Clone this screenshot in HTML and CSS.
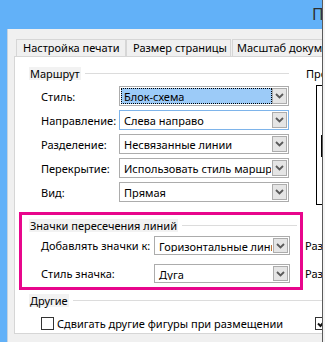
FILE: index.html
```html
<!DOCTYPE html>
<html lang="ru">
<head>
    <meta charset="UTF-8">
    <title>Параметры страницы</title>
    <link rel="stylesheet" href="styles.css">
</head>
<body>
    <div class="window">
        <div class="titlebar">Параметры страницы</div>

        <div class="dialog">
            <div class="tabs">
                <div class="tab tab-print">Настройка печати</div>
                <div class="tab tab-size">Размер страницы</div>
                <div class="tab tab-scale">Масштаб документа</div>
                <div class="tab">Свойства страницы</div>
            </div>

            <div class="panel">
                <!-- Маршрут + просмотр -->
                <div class="section">
                    <div class="col-left">
                        <div class="group-head route-head">
                            <span class="group-label">Маршрут</span>
                            <span class="group-line"></span>
                        </div>
                        <div class="row">
                            <span class="row-label">Стиль:</span>
                            <div class="select">
                                <span class="value focused">Блок-схема</span>
                                <span class="arrow"><svg width="9" height="6" viewBox="0 0 9 6"><polyline points="1,1 4.5,4.5 8,1" fill="none" stroke="#5a5a5a" stroke-width="1.8"/></svg></span>
                            </div>
                        </div>
                        <div class="row">
                            <span class="row-label">Направление:</span>
                            <div class="select hover">
                                <span class="value">Слева направо</span>
                                <span class="arrow"><svg width="9" height="6" viewBox="0 0 9 6"><polyline points="1,1 4.5,4.5 8,1" fill="none" stroke="#5a5a5a" stroke-width="1.8"/></svg></span>
                            </div>
                        </div>
                        <div class="row">
                            <span class="row-label">Разделение:</span>
                            <div class="select">
                                <span class="value">Несвязанные линии</span>
                                <span class="arrow"><svg width="9" height="6" viewBox="0 0 9 6"><polyline points="1,1 4.5,4.5 8,1" fill="none" stroke="#5a5a5a" stroke-width="1.8"/></svg></span>
                            </div>
                        </div>
                        <div class="row">
                            <span class="row-label">Перекрытие:</span>
                            <div class="select">
                                <span class="value">Использовать стиль маршрута</span>
                                <span class="arrow"><svg width="9" height="6" viewBox="0 0 9 6"><polyline points="1,1 4.5,4.5 8,1" fill="none" stroke="#5a5a5a" stroke-width="1.8"/></svg></span>
                            </div>
                        </div>
                        <div class="row">
                            <span class="row-label">Вид:</span>
                            <div class="select">
                                <span class="value">Прямая</span>
                                <span class="arrow"><svg width="9" height="6" viewBox="0 0 9 6"><polyline points="1,1 4.5,4.5 8,1" fill="none" stroke="#5a5a5a" stroke-width="1.8"/></svg></span>
                            </div>
                        </div>
                    </div>
                    <div class="col-right">
                        <div class="group-head">
                            <span class="preview-label">Просмотр</span>
                        </div>
                        <div class="preview">
                            <div class="preview-bar"></div>
                        </div>
                    </div>
                </div>

                <!-- Значки пересечения линий -->
                <div class="section jumps">
                    <div class="highlight">
                        <div class="group-head">
                            <span class="group-label">Значки пересечения линий</span>
                            <span class="group-line"></span>
                        </div>
                        <div class="row small">
                            <span class="row-label wide">Добавлять значки к:</span>
                            <div class="select narrow">
                                <span class="value">Горизонтальные линии</span>
                                <span class="arrow"><svg width="9" height="6" viewBox="0 0 9 6"><polyline points="1,1 4.5,4.5 8,1" fill="none" stroke="#5a5a5a" stroke-width="1.8"/></svg></span>
                            </div>
                        </div>
                        <div class="row small second">
                            <span class="row-label wide">Стиль значка:</span>
                            <div class="select narrow">
                                <span class="value">Дуга</span>
                                <span class="arrow"><svg width="9" height="6" viewBox="0 0 9 6"><polyline points="1,1 4.5,4.5 8,1" fill="none" stroke="#5a5a5a" stroke-width="1.8"/></svg></span>
                            </div>
                        </div>
                    </div>
                    <div class="jump-sizes">
                        <div class="size-label">Размер по вертикали:</div>
                        <div class="size-label second">Размер по горизонтали:</div>
                    </div>
                </div>

                <!-- Другие -->
                <div class="group-head other-head">
                    <span class="group-label">Другие</span>
                    <span class="group-line"></span>
                </div>
                <div class="check-row">
                    <label class="check">
                        <span class="box"></span>
                        <span>Сдвигать другие фигуры при размещении</span>
                    </label>
                    <label class="check right">
                        <span class="box"><svg width="11" height="11" viewBox="0 0 11 11"><polyline points="2,5.5 4.5,8 9,2.5" fill="none" stroke="#111" stroke-width="2"/></svg></span>
                        <span>Разрешить</span>
                    </label>
                </div>
            </div>
        </div>
    </div>
</body>
</html>
```
FILE: styles.css
```css
* {
    margin: 0;
    padding: 0;
    box-sizing: border-box;
}

body {
    width: 325px;
    height: 342px;
    overflow: hidden;
    background: #f4f4f4;
    font-family: "Noto Sans", sans-serif;
    font-size: 11px;
    color: #000;
}

.window {
    width: 323px;
    height: 342px;
    background: #62b1f8;
    border-right: 1px solid #5a5a5a;
    display: flex;
    flex-direction: column;
    overflow: hidden;
}

.titlebar {
    height: 29px;
    flex-shrink: 0;
    padding-left: 312px;
    font-size: 16px;
    line-height: 28px;
    color: #2d2d2d;
    white-space: nowrap;
    overflow: hidden;
}

.dialog {
    flex: 1;
    margin-left: 7px;
    border-left: 1px solid #c3d2e0;
    background: #f0f0f0;
    padding-top: 10px;
    overflow: hidden;
}

.tabs {
    display: flex;
    padding-left: 8px;
    height: 17px;
    white-space: nowrap;
}

.tab {
    flex-shrink: 0;
    height: 17px;
    padding: 0 6px;
    border: 1px solid #d6d6d6;
    border-bottom: none;
    line-height: 15px;
    background: #f0f0f0;
    margin-right: 1px;
}

.tab-print {
    width: 110px;
    margin-right: 0;
}

.tab-size {
    width: 105px;
}

.tab-scale {
    padding-left: 4px;
}

.panel {
    margin-left: 6px;
    width: 330px;
    height: 278px;
    background: #fff;
    border: 1px solid #d6d6d6;
}

.section {
    display: flex;
}

.col-left {
    width: 291px;
    flex-shrink: 0;
    padding-left: 14px;
}

.group-head {
    display: flex;
    align-items: center;
    height: 13px;
    line-height: 13px;
    white-space: nowrap;
}

.route-head {
    margin-top: 10px;
    width: 260px;
}

.group-label {
    background: #f2f2f2;
    padding: 0 1px;
}

.group-line {
    flex: 1;
    height: 1px;
    background: #dcdcdc;
    margin-left: 4px;
}

.row {
    display: flex;
    align-items: center;
    height: 20px;
    margin-top: 4px;
    padding-left: 12px;
}

.route-head + .row {
    margin-top: 6px;
}

.row-label {
    width: 78px;
    flex-shrink: 0;
    white-space: nowrap;
}

.row-label.wide {
    width: 113px;
}

.select {
    display: flex;
    width: 170px;
    height: 20px;
    padding: 1px;
    border: 1px solid #acacac;
    background: #fff;
}

.select.hover {
    border-color: #7eb4ea;
}

.select.narrow {
    width: 136px;
    height: 19px;
}

.value {
    flex: 1;
    min-width: 0;
    padding-left: 2px;
    line-height: 15px;
    white-space: nowrap;
    overflow: hidden;
    border: 1px solid transparent;
}

.value.focused {
    background: #9ccbf8;
    border: 1px dotted #000;
}

.arrow {
    width: 15px;
    flex-shrink: 0;
    border: 1px solid #acacac;
    background: #e5e5e5;
    display: flex;
    align-items: center;
    justify-content: center;
}

.col-right {
    padding-top: 10px;
}

.preview-label {
    white-space: nowrap;
}

.preview {
    width: 40px;
    height: 120px;
    margin: 5px 0 0 10px;
    border: 1px solid #000;
}

.preview-bar {
    width: 3px;
    height: 22px;
    margin: 49px 0 0 4px;
    background: #000;
}

.jumps {
    margin-top: 7px;
}

.highlight {
    width: 284px;
    height: 78px;
    flex-shrink: 0;
    margin-left: 4px;
    border: 3px solid #e8068c;
    padding: 4px 3px 0 7px;
}

.highlight .row {
    padding-left: 12px;
}

.row.small {
    height: 19px;
    margin-top: 4px;
}

.row.small.second {
    margin-top: 9px;
}

.jump-sizes {
    padding: 24px 0 0 2px;
    white-space: nowrap;
}

.size-label {
    height: 19px;
    line-height: 19px;
}

.size-label.second {
    margin-top: 9px;
}

.other-head {
    margin: 4px 0 0 14px;
}

.check-row {
    display: flex;
    margin-top: 10px;
    padding-left: 26px;
    white-space: nowrap;
}

.check {
    display: flex;
    align-items: center;
    gap: 3px;
    height: 13px;
    width: 274px;
    flex-shrink: 0;
}

.check.right {
    width: auto;
}

.box {
    width: 13px;
    height: 13px;
    flex-shrink: 0;
    border: 1px solid #333;
    background: #fff;
    display: flex;
    align-items: center;
    justify-content: center;
}
```
